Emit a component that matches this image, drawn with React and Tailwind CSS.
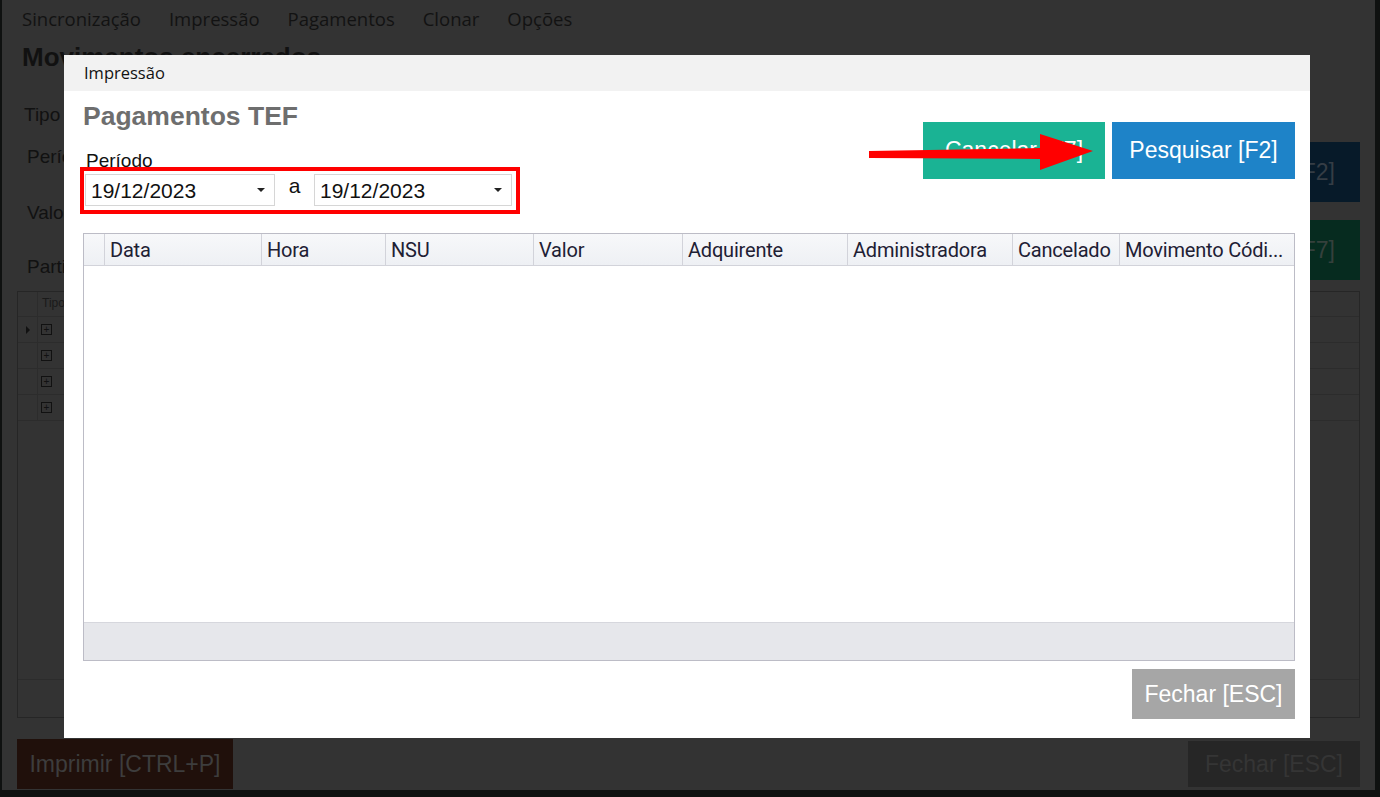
import React from "react";

const menu = ["Sincronização", "Impressão", "Pagamentos", "Clonar", "Opções"];

const cols = [
  { label: "", w: "w-[21px]" },
  { label: "Data", w: "w-[157px]" },
  { label: "Hora", w: "w-[124px]" },
  { label: "NSU", w: "w-[148px]" },
  { label: "Valor", w: "w-[149px]" },
  { label: "Adquirente", w: "w-[165px]" },
  { label: "Administradora", w: "w-[165px]" },
  { label: "Cancelado", w: "w-[107px]" },
  { label: "Movimento Códi...", w: "flex-1" },
];

function DateBox({ value, width }) {
  return (
    <div className={`${width} h-[32px] bg-white border border-[#d6d6d6] flex items-center justify-between pl-[5px] pr-[9px]`}>
      <span className="text-[21px] text-[#111] leading-none">{value}</span>
      <span className="w-0 h-0 border-l-[4px] border-r-[4px] border-t-[4px] border-l-transparent border-r-transparent border-t-[#222]" />
    </div>
  );
}

// background app, dimmed by the modal overlay
function Background() {
  return (
    <div className="w-full h-full bg-[#333333] flex flex-col">
      <div className="h-[38px] shrink-0 flex items-center pl-[20px] gap-[28px] font-['Open_Sans',sans-serif] text-[18.5px] text-[#121212]">
        {menu.map((m) => (
          <span key={m}>{m}</span>
        ))}
      </div>
      <div className="flex-1 flex flex-col px-[15px]">
        <div className="flex h-[253px] shrink-0">
          <div className="flex-1 flex flex-col text-[#111]">
            <div className="text-[26px] font-bold leading-none mt-[6px] ml-[5px]">Movimentos encerrados</div>
            <div className="text-[19px] mt-[31px] ml-[7px]">Tipo</div>
            <div className="text-[19px] mt-[13px] ml-[10px]">Período</div>
            <div className="text-[19px] mt-[28px] ml-[10px]">Valor</div>
            <div className="text-[19px] mt-[25px] ml-[10px]">Partição</div>
          </div>
          <div className="flex flex-col w-[180px]">
            <div className="h-[60px] mt-[104px] bg-[#071a29] flex items-center justify-end pr-[25px] text-[23px] text-[#353d45]">
              Pesquisar [F2]
            </div>
            <div className="h-[60px] mt-[18px] bg-[#062b1f] flex items-center justify-end pr-[25px] text-[23px] text-[#35403c]">
              Cancelar [F7]
            </div>
          </div>
        </div>
        <div className="h-[427px] shrink-0 border border-[#262626] flex flex-col">
          <div className="h-[25px] border-b border-[#2c2c2c] flex text-[12px] text-[#1a1a1a]">
            <div className="w-[20px] border-r border-[#2c2c2c]" />
            <div className="pl-[4px] pt-[2px]">Tipo</div>
          </div>
          {[0, 1, 2, 3].map((i) => (
            <div key={i} className="h-[26px] border-b border-[#2c2c2c] flex items-center">
              <div className="w-[20px] h-full border-r border-[#2c2c2c] flex items-center justify-center">
                {i === 0 && (
                  <span className="w-0 h-0 border-t-[4px] border-b-[4px] border-l-[4px] border-t-transparent border-b-transparent border-l-[#111]" />
                )}
              </div>
              <div className="ml-[3px] w-[11px] h-[11px] border border-[#111] flex items-center justify-center text-[10px] leading-none text-[#111]">+</div>
            </div>
          ))}
          <div className="flex-1" />
          <div className="h-[38px] border-t border-[#2c2c2c]" />
        </div>
        <div className="flex justify-between mt-[21px]">
          <div className="w-[216px] h-[50px] bg-[#20100b] flex items-center justify-center text-[23px] text-[#3d3d3d]">
            Imprimir [CTRL+P]
          </div>
          <div className="mt-[2px] w-[172px] h-[46px] bg-[#262626] flex items-center justify-center text-[23px] text-[#353535]">
            Fechar [ESC]
          </div>
        </div>
      </div>
    </div>
  );
}

function Modal() {
  return (
    <div className="absolute left-[64px] top-[55px] w-[1246px] h-[683px] bg-white flex flex-col">
      <div className="h-[36px] bg-[#f2f2f2] flex items-center pl-[20px] font-['Open_Sans',sans-serif] text-[16.5px] text-[#111]">
        Impressão
      </div>
      <div className="flex-1 flex flex-col pl-[19px] pr-[15px]">
        <div className="flex justify-between h-[142px]">
          <div className="flex flex-col">
            <div className="text-[26.5px] font-bold text-[#6e6e6e] leading-none mt-[12px]">Pagamentos TEF</div>
            <div className="text-[19px] text-[#111] leading-none mt-[21px] ml-[3px]">Período</div>
            <div className="mt-[-3px] ml-[-3px] w-[440px] h-[47px] border-[4px] border-[#ff0000] flex items-center pl-[1px]">
              <DateBox value="19/12/2023" width="w-[190px]" />
              <span className="w-[39px] text-center text-[21px] text-[#111] mb-[8px]">a</span>
              <DateBox value="19/12/2023" width="w-[198px]" />
            </div>
          </div>
          <div className="flex gap-[7px] mt-[31px]">
            <div className="w-[182px] h-[57px] bg-[#1ab394] flex items-center justify-center text-[23px] text-white">
              Cancelar [F7]
            </div>
            <div className="w-[183px] h-[57px] bg-[#1e83c8] flex items-center justify-center text-[23px] text-white">
              Pesquisar [F2]
            </div>
          </div>
        </div>
        <div className="h-[428px] border border-[#bcbcc6] flex flex-col font-['Roboto',sans-serif]">
          <div className="h-[32px] flex bg-gradient-to-b from-[#f7f8fa] to-[#eef0f4] border-b border-[#d2d3da]">
            {cols.map((c, i) => (
              <div
                key={i}
                className={`${c.w} h-full flex items-center pl-[5px] text-[20px] tracking-[-0.2px] text-[#1e2034] whitespace-nowrap overflow-hidden ${i < cols.length - 1 ? "border-r border-[#d2d3da]" : ""}`}
              >
                {c.label}
              </div>
            ))}
          </div>
          <div className="flex-1 bg-white" />
          <div className="h-[38px] bg-[#e6e7eb] border-t border-[#d6d7dd]" />
        </div>
        <div className="flex justify-end mt-[8px]">
          <div className="w-[163px] h-[50px] bg-[#a6a6a6] flex items-center justify-center text-[23px] text-white">
            Fechar [ESC]
          </div>
        </div>
      </div>
    </div>
  );
}

export default function App() {
  return (
    <div className="w-[1380px] h-[797px] bg-[#0f1110] relative overflow-hidden font-['Liberation_Sans',Arial,sans-serif]">
      <div className="ml-[2px] w-[1373px] h-[790px]">
        <Background />
      </div>
      <Modal />
      {/* red annotation arrow */}
      <svg className="absolute left-[866px] top-[130px]" width="232" height="44" viewBox="0 0 232 44">
        <polygon points="3,21 174,18 174,29 3,28" fill="#ff0000" />
        <polygon points="174,4 227,21 174,40" fill="#ff0000" />
      </svg>
    </div>
  );
}
